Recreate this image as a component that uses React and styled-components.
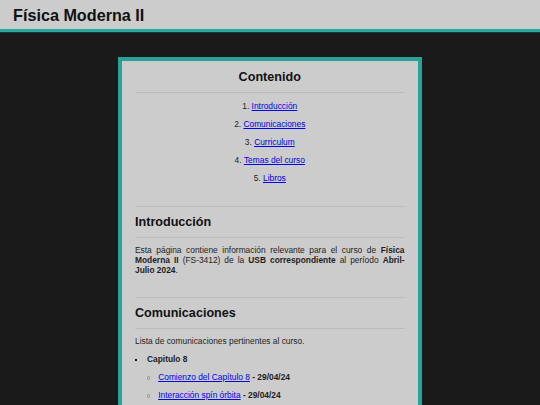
import React from "react";
import styled, { createGlobalStyle } from "styled-components";

const Global = createGlobalStyle`
  html, body { margin: 0; padding: 0; }
  body {
    background: #1a1a1a;
    font-family: "Liberation Sans", Arial, sans-serif;
    color: #1e1e1e;
  }
`;

const Header = styled.header`
  box-sizing: border-box;
  height: 32px;
  padding: 5.5px 13px 0;
  background: #cccccc;
  border-bottom: 3px solid #2aa89b;
  box-shadow: 0 1px 0 #0f3d38;
`;

const Title = styled.h1`
  margin: 0;
  font-size: 16.2px;
  font-weight: bold;
  color: #111;
`;

const Panel = styled.main`
  box-sizing: border-box;
  width: 304px;
  margin: 25px auto 0;
  background: #cccccc;
  border: 4px solid #28a497;
  padding: 0 13.5px 0 13px;
  font-size: 8.4px;
  line-height: 9.7px;
`;

const Section = styled.section`
  padding: ${(p) => p.$top || 8}px 0 ${(p) => p.$bottom || 23.5}px;
  & + & { border-top: 1px solid #bdbdbd; }
`;

const H2 = styled.h2`
  margin: 0;
  padding-bottom: 7.5px;
  border-bottom: 1px solid #bcbcbc;
  font-size: 12.6px;
  line-height: 14.5px;
  font-weight: bold;
  color: #111;
  text-align: ${(p) => (p.$center ? "center" : "left")};
`;

const Toc = styled.ol`
  margin: 8.7px 0 0;
  padding: 0;
  list-style-position: inside;
  text-align: center;
`;

const TocItem = styled.li`
  & + & { margin-top: 8.3px; }
`;

const Link = styled.a`
  color: #0000ee;
  text-decoration: underline;
`;

const Para = styled.p`
  margin: ${(p) => p.$top || 8}px 0 0;
  text-align: ${(p) => (p.$justify ? "justify" : "left")};
`;

const List = styled.ul`
  margin: 8.7px 0 0;
  padding: 0;
  list-style: none;
`;

const Item = styled.li`
  margin-top: ${(p) => (p.$first ? "0" : "8.3px")};
  font-weight: bold;
`;

const ItemRow = styled.div`
  display: flex;
  align-items: center;
  &::before {
    content: "";
    flex: none;
    width: 2px;
    height: 2px;
    background: #111;
    margin: 0 9.7px 0 0.3px;
  }
`;

const SubList = styled.ul`
  margin: 8.3px 0 0;
  padding: 0 0 0 11.7px;
  list-style: none;
`;

const SubItem = styled.li`
  display: flex;
  align-items: center;
  font-weight: bold;
  & + & { margin-top: 8.3px; }
  &::before {
    content: "";
    flex: none;
    box-sizing: border-box;
    width: 3.6px;
    height: 3.6px;
    border: 1px solid #8f8f8f;
    border-radius: 50%;
    margin: 0 7.9px 0 0;
  }
`;

const Plain = styled.span`
  font-weight: normal;
`;

const subs = [
  ["Comienzo del Capítulo 8", "29/04/24"],
  ["Interacción spín órbita", "29/04/24"],
  ["Efecto Zeeman", "06/05/24"],
];

export default function App() {
  return (
    <>
      <Global />
      <Header>
        <Title>Física Moderna II</Title>
      </Header>
      <Panel>
        <Section $top={9} $bottom={22.5}>
          <H2 $center>Contenido</H2>
          <Toc>
            {["Introducción", "Comunicaciones", "Curriculum", "Temas del curso", "Libros"].map((t) => (
              <TocItem key={t}>
                <Link href="#">{t}</Link>
              </TocItem>
            ))}
          </Toc>
        </Section>
        <Section $bottom={21}>
          <H2>Introducción</H2>
          <Para $justify $top={8.5}>
            Esta página contiene información relevante para el curso de <b>Física Moderna II</b> (FS-3412)
            de la <b>USB correspondiente</b> al período <b>Abril-Julio 2024</b>.
          </Para>
        </Section>
        <Section>
          <H2>Comunicaciones</H2>
          <Para>Lista de comunicaciones pertinentes al curso.</Para>
          <List>
            <Item $first>
              <ItemRow>Capitulo 8</ItemRow>
              <SubList>
                {subs.map(([t, d]) => (
                  <SubItem key={t}>
                    <span>
                      <Link href="#"><Plain>{t}</Plain></Link> - {d}
                    </span>
                  </SubItem>
                ))}
              </SubList>
            </Item>
          </List>
        </Section>
      </Panel>
    </>
  );
}
